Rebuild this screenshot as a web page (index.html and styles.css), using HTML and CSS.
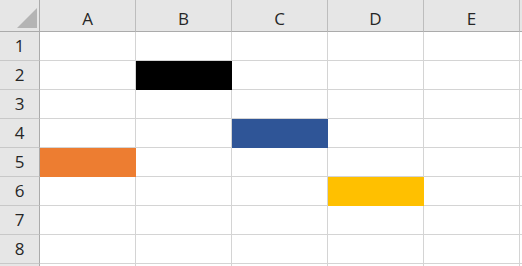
FILE: index.html
```html
<!DOCTYPE html>
<html>
<head>
<meta charset="utf-8">
<link rel="stylesheet" href="styles.css">
</head>
<body>
<div class="sheet">
  <div class="corner"><span class="tri"></span></div>
  <div class="colh">A</div><div class="colh">B</div><div class="colh">C</div><div class="colh">D</div><div class="colh">E</div><div class="colh"></div>

  <div class="rowh">1</div><div class="cell"></div><div class="cell"></div><div class="cell"></div><div class="cell"></div><div class="cell"></div><div class="cell"></div>
  <div class="rowh">2</div><div class="cell"></div><div class="cell fill-black"></div><div class="cell"></div><div class="cell"></div><div class="cell"></div><div class="cell"></div>
  <div class="rowh">3</div><div class="cell"></div><div class="cell"></div><div class="cell"></div><div class="cell"></div><div class="cell"></div><div class="cell"></div>
  <div class="rowh">4</div><div class="cell"></div><div class="cell"></div><div class="cell fill-blue"></div><div class="cell"></div><div class="cell"></div><div class="cell"></div>
  <div class="rowh">5</div><div class="cell fill-orange"></div><div class="cell"></div><div class="cell"></div><div class="cell"></div><div class="cell"></div><div class="cell"></div>
  <div class="rowh">6</div><div class="cell"></div><div class="cell"></div><div class="cell"></div><div class="cell fill-yellow"></div><div class="cell"></div><div class="cell"></div>
  <div class="rowh">7</div><div class="cell"></div><div class="cell"></div><div class="cell"></div><div class="cell"></div><div class="cell"></div><div class="cell"></div>
  <div class="rowh">8</div><div class="cell"></div><div class="cell"></div><div class="cell"></div><div class="cell"></div><div class="cell"></div><div class="cell"></div>
  <div class="rowh"></div><div class="cell"></div><div class="cell"></div><div class="cell"></div><div class="cell"></div><div class="cell"></div><div class="cell"></div>
</div>
</body>
</html>
```
FILE: styles.css
```css
html, body {
  margin: 0;
  padding: 0;
  background: #ffffff;
  overflow: hidden;
}
.sheet {
  display: grid;
  grid-template-columns: 40px repeat(6, 96px);
  grid-template-rows: 32px repeat(9, 29px);
  width: 522px;
  height: 266px;
  overflow: hidden;
  font-family: "Open Sans", "Noto Sans", sans-serif;
  font-size: 17px;
  color: #262626;
}
.sheet > div {
  box-sizing: border-box;
}
.corner {
  background: #e6e6e6;
  border-right: 1px solid #ababab;
  border-bottom: 1px solid #ababab;
  position: relative;
}
.tri {
  position: absolute;
  right: 2px;
  bottom: 3px;
  width: 0;
  height: 0;
  border-left: 20px solid transparent;
  border-bottom: 20px solid #b4b4b4;
}
.colh {
  background: #e6e6e6;
  border-right: 1px solid #bdbdbd;
  border-bottom: 1px solid #ababab;
  text-align: center;
  line-height: 20px;
  padding-top: 9px;
}
.rowh {
  background: #e6e6e6;
  border-right: 1px solid #ababab;
  border-bottom: 1px solid #c8c8c8;
  text-align: center;
  line-height: 20px;
  padding-top: 4px;
}
.cell {
  border-right: 1px solid #d4d4d4;
  border-bottom: 1px solid #d4d4d4;
  background: #ffffff;
}
.fill-black { background: #000000; border-color: #000000; }
.fill-blue { background: #2f5597; border-color: #2f5597; }
.fill-orange { background: #ed7d31; border-color: #ed7d31; }
.fill-yellow { background: #ffc000; border-color: #ffc000; }
```
